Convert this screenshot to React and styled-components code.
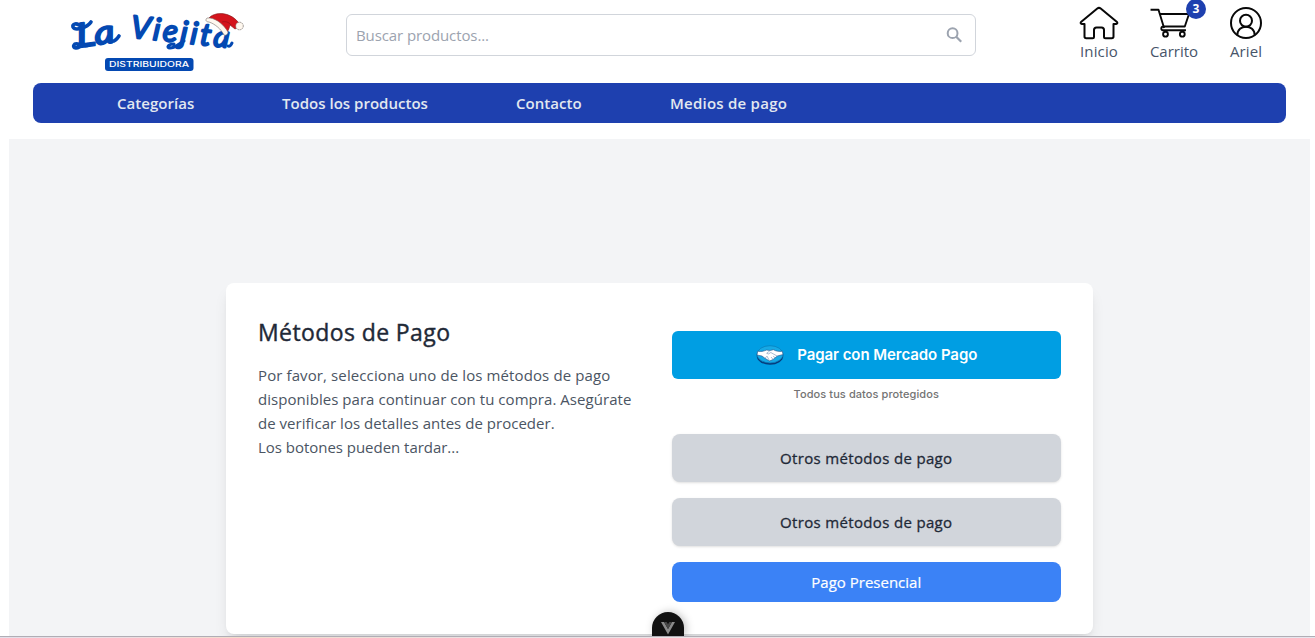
import React from "react";
import styled, { createGlobalStyle } from "styled-components";

const GlobalStyle = createGlobalStyle`
  *, *::before, *::after { box-sizing: border-box; }
  body {
    margin: 0;
    overflow: hidden;
    background: #fff;
    font-family: "Open Sans", "Noto Sans", sans-serif;
    font-size: 15px;
    line-height: 24px;
  }
  h1, p { margin: 0; }
  button, input { font: inherit; }
  svg { display: block; }
`;

const Page = styled.div`
  height: 638px;
  display: flex;
  flex-direction: column;
  overflow: hidden;
`;

const Header = styled.header`
  height: 83px;
  flex: none;
  display: grid;
  grid-template-columns: 346px 630px 1fr;
  align-items: start;
`;

const LogoLink = styled.a`
  padding-left: 64px;
`;

const SearchBox = styled.label`
  height: 42px;
  margin-top: 14px;
  padding: 0 12px 0 9px;
  display: flex;
  align-items: center;
  border: 1px solid #d1d5db;
  border-radius: 6px;
`;

const SearchInput = styled.input`
  flex: 1;
  min-width: 0;
  padding: 0;
  border: 0;
  outline: 0;
  background: transparent;
  letter-spacing: -0.1px;
  &::placeholder { color: #9ca3af; opacity: 1; }
`;

const Actions = styled.nav`
  display: flex;
  padding: 6px 53px 0 0;
  justify-content: flex-end;
  gap: 32px;
`;

const Action = styled.a`
  position: relative;
  display: flex;
  flex-direction: column;
  align-items: center;
  width: ${(p) => p.$width}px;
  color: #475569;
  letter-spacing: ${(p) => p.$spacing || 0}px;
  white-space: nowrap;
`;

const ActionLabel = styled.span`
  margin-top: -1px;
`;

const Badge = styled.span`
  position: absolute;
  top: -7px;
  right: -8px;
  width: 20px;
  height: 20px;
  border-radius: 50%;
  background: #1e40af;
  color: #fff;
  font-size: 12px;
  font-weight: 700;
  line-height: 20px;
  text-align: center;
`;

const NavBar = styled.nav`
  height: 40px;
  flex: none;
  margin: 0 29px 16px 33px;
  padding-left: 84px;
  display: flex;
  align-items: center;
  gap: 88px;
  border-radius: 8px;
  background: #1e40af;
`;

const NavLink = styled.a`
  width: ${(p) => p.$width}px;
  color: #e2e8f0;
  font-weight: 600;
  letter-spacing: ${(p) => p.$spacing}px;
  white-space: nowrap;
`;

const Main = styled.main`
  flex: 1;
  min-height: 0;
  margin: 0 5px 0 9px;
  padding: 144px 217px 0;
  background: #f3f4f6;
`;

const Card = styled.section`
  height: 351px;
  padding: 32px;
  display: grid;
  grid-template-columns: 1fr 1fr;
  gap: 24px;
  border-radius: 8px;
  background: #fff;
  box-shadow: 0 10px 15px -3px rgba(0, 0, 0, 0.1), 0 4px 6px -4px rgba(0, 0, 0, 0.1);
`;

const Title = styled.h1`
  margin: 1px 0 15px;
  color: #1f2937;
  font-size: 23px;
  font-weight: 500;
  line-height: 32px;
  letter-spacing: 0.4px;
  -webkit-text-stroke: 0.4px currentColor;
`;

const Copy = styled.p`
  color: #4b5563;
  white-space: nowrap;
  letter-spacing: ${(p) => p.$spacing || 0}px;
`;

const Options = styled.div`
  padding-top: 16px;
  display: flex;
  flex-direction: column;
`;

const Button = styled.button`
  height: ${(p) => p.$height || 48}px;
  flex: none;
  margin: 0 0 ${(p) => p.$after || 0}px;
  padding: 0;
  display: flex;
  align-items: center;
  justify-content: center;
  border: 0;
  border-radius: 8px;
`;

const MercadoButton = styled(Button)`
  gap: 13px;
  padding-left: 1px;
  border-radius: 6px;
  background: #009ee3;
  color: #fff;
  font-family: Inter, sans-serif;
  font-size: 15px;
  font-weight: 600;
  letter-spacing: -0.06px;
`;

const OtherButton = styled(Button)`
  background: #d1d5db;
  color: #1f2937;
  font-weight: 500;
  letter-spacing: 0.34px;
  -webkit-text-stroke: 0.3px currentColor;
  box-shadow: 0 1px 3px rgba(0, 0, 0, 0.1), 0 1px 2px -1px rgba(0, 0, 0, 0.1);
`;

const InPersonButton = styled(Button)`
  background: #3b82f6;
  color: #fff;
  font-weight: 500;
  -webkit-text-stroke: 0.2px currentColor;
`;

const Security = styled.p`
  height: 55px;
  padding-top: 7px;
  color: #737373;
  font-family: Inter, sans-serif;
  font-size: 11px;
  font-weight: 500;
  line-height: 16px;
  letter-spacing: 0.08px;
  text-align: center;
`;

const BottomEdge = styled.footer`
  height: 2px;
  flex: none;
  border-top: 1px solid #b0adb5;
  background: linear-gradient(90deg, #e2dfe9, #eedde1 10%, #f3dccb 18%, #e9e2e6 40%, #ece4e4 70%, #e7e5ed);
`;

const DevTools = styled.button`
  position: absolute;
  left: 652px;
  top: 612px;
  width: 32px;
  height: 24px;
  padding: 9px 0 0 9px;
  border: 0;
  border-radius: 16px 16px 0 0;
  background: #111;
  box-shadow: 2px 0 8px rgba(0, 0, 0, 0.25);
  clip-path: inset(-10px -14px 0 -14px);
`;

const Logo = () => (
  <svg width="190" height="78" viewBox="64 0 190 78" role="img" aria-label="La Viejita Distribuidora">
    <g
      fill="#0449b2"
      stroke="#0449b2"
      strokeWidth="2"
      strokeLinejoin="round"
      fontFamily="Lato, sans-serif"
      fontWeight="400"
      fontStyle="italic"
    >
      <text x="78" y="47.5" fontSize="33" textLength="38" lengthAdjust="spacingAndGlyphs" transform="rotate(-8 78 47.5)">La</text>
      <text x="130" y="37.5" fontSize="31" textLength="99" lengthAdjust="spacing" transform="rotate(6 130 37.5)">Viejita</text>
    </g>
    <g fill="none" stroke="#0449b2" strokeWidth="3.6" strokeLinecap="round">
      <path d="M91 22c-4 6-16 9-18 5-1-3 3-4 6-2M82 44c-4 6-10 4-8 1 2-4 9 3 15 0M111 41c3 1 6-2 8-5" />
      <path d="M174 44c-6 0-8 4-4 4 5 0 8-4 14-7M228 46c2 1 3-1 4-3" strokeWidth="3" />
    </g>
    <path d="M209 18c5-6 20-7 29 4l2 4-5 3-5-4c-1 4-2 7-5 9-4-8-9-12-16-16z" fill="#d4141c" stroke="#7d1717" strokeWidth=".6" />
    <path d="M222 22c3-1 7 0 9 3" fill="none" stroke="#931219" strokeWidth=".7" />
    <path d="M207 18c-2 2-1 4 2 4 6 2 12 7 15 13 2 1 4-1 4-3-4-7-11-13-18-14z" fill="#fff8ef" stroke="#756d68" strokeWidth=".6" />
    <circle cx="239.5" cy="26" r="3.8" fill="#fff8ef" stroke="#756d68" strokeWidth=".7" strokeDasharray="1.5 .5" />
    <rect x="105" y="58" width="88.5" height="13" rx="3" fill="#0449b2" />
    <text x="109" y="67.2" fill="#fff" fontFamily="Inter, sans-serif" fontSize="7.6" fontWeight="500" textLength="80" lengthAdjust="spacingAndGlyphs">DISTRIBUIDORA</text>
  </svg>
);

const SearchIcon = () => (
  <svg width="17" height="17" viewBox="0 0 17 17" fill="none" stroke="#9ca3af">
    <circle cx="6.6" cy="6.2" r="4.9" strokeWidth="2" />
    <path d="M10.2 9.8l5 5" strokeWidth="2.2" />
  </svg>
);

const HomeIcon = () => (
  <svg width="40" height="34" viewBox="0 0 40 34" fill="none" stroke="#080808" strokeWidth="2" strokeLinecap="round" strokeLinejoin="round">
    <path d="M5.5 18H3Q1 17.4 2 16L18.3 2.5Q20 1.2 21.7 2.5L38 16Q39 17.4 37 18H34.5V30.5Q34.5 32.2 32.8 32.2H26.5Q25 32.2 25 30.7V24Q25 21.5 22.5 21.5H17.5Q15 21.5 15 24V30.7Q15 32.2 13.5 32.2H7.2Q5.5 32.2 5.5 30.5Z" />
  </svg>
);

const CartIcon = () => (
  <svg width="48" height="34" viewBox="0 0 48 34" fill="none" stroke="#080808" strokeWidth="1.9" strokeLinecap="square" strokeLinejoin="round">
    <path d="M1.5 3.8H8.5L13.8 21" />
    <path d="M10 8H39L34.8 20.5H13.5C10.8 20.5 10.5 24 13 24.2H35" />
    <circle cx="15.5" cy="28.2" r="2.4" />
    <circle cx="32.3" cy="28.2" r="2.4" />
  </svg>
);

const UserIcon = () => (
  <svg width="34" height="34" viewBox="0 0 34 34" fill="none" stroke="#080808" strokeWidth="2">
    <circle cx="17" cy="17" r="15" />
    <circle cx="17" cy="14.7" r="6" />
    <path d="M8.3 29.2C8.3 17.8 25.7 17.8 25.7 29.2" />
  </svg>
);

const HandshakeIcon = () => (
  <svg width="28" height="20" viewBox="0 0 28 20">
    <ellipse cx="14" cy="10.8" rx="13.3" ry="9" fill="#063c7c" />
    <ellipse cx="14" cy="9.3" rx="13" ry="8.6" fill="#17a9e5" stroke="#087db9" strokeWidth=".7" />
    <path d="M1.7 6.2C5.4 7 8 6 10.5 5.1L14 5.5 17.5 4.7C20 6.2 23 6.8 26.3 6.2L27 9.5 21.3 11 17 14.5 13.5 16 9 13.3 6 11 1 10Z" fill="#fff" stroke="#27548b" strokeWidth=".6" />
    <path d="M14 5.6L10.7 8.3Q12 10 14.8 7.5L21 11M9 13.2L11 11.2L13.5 15.7M17.3 11L19 13M15 12L17 14.3" fill="none" stroke="#6f8db1" strokeWidth=".6" />
  </svg>
);

const VueIcon = () => (
  <svg width="14" height="13" viewBox="0 0 14 13">
    <path d="M0 0h3l4 7 4-7h3L7 12.5z" fill="#8a8a8a" />
    <path d="M3 0h2.6L7 2.3 8.4 0H11L7 7z" fill="#484848" />
  </svg>
);

const links = [
  { label: "Categorías", width: 77, spacing: 0.05 },
  { label: "Todos los productos", width: 146, spacing: 0.02 },
  { label: "Contacto", width: 66, spacing: 0.05 },
  { label: "Medios de pago", width: 117, spacing: 0.24 },
];

export default function App() {
  return (
    <Page>
      <GlobalStyle />
      <Header>
        <LogoLink><Logo /></LogoLink>
        <SearchBox>
          <SearchInput placeholder="Buscar productos..." />
          <SearchIcon />
        </SearchBox>
        <Actions>
          <Action $width={38} $spacing={0.15}><HomeIcon /><ActionLabel>Inicio</ActionLabel></Action>
          <Action $width={48}><CartIcon /><ActionLabel>Carrito</ActionLabel><Badge>3</Badge></Action>
          <Action $width={32} $spacing={0.1}><UserIcon /><ActionLabel>Ariel</ActionLabel></Action>
        </Actions>
      </Header>
      <NavBar>
        {links.map((l) => (
          <NavLink key={l.label} $width={l.width} $spacing={l.spacing}>{l.label}</NavLink>
        ))}
      </NavBar>
      <Main>
        <Card>
          <div>
            <Title>Métodos de Pago</Title>
            <Copy $spacing={0.11}>Por favor, selecciona uno de los métodos de pago</Copy>
            <Copy $spacing={0.05}>disponibles para continuar con tu compra. Asegúrate</Copy>
            <Copy $spacing={0.03}>de verificar los detalles antes de proceder.</Copy>
            <Copy $spacing={-0.03}>Los botones pueden tardar...</Copy>
          </div>
          <Options>
            <MercadoButton><HandshakeIcon />Pagar con Mercado Pago</MercadoButton>
            <Security>Todos tus datos protegidos</Security>
            <OtherButton $after={16}>Otros métodos de pago</OtherButton>
            <OtherButton $after={16}>Otros métodos de pago</OtherButton>
            <InPersonButton $height={40}>Pago Presencial</InPersonButton>
          </Options>
        </Card>
      </Main>
      <BottomEdge />
      <DevTools aria-label="Vue DevTools"><VueIcon /></DevTools>
    </Page>
  );
}
